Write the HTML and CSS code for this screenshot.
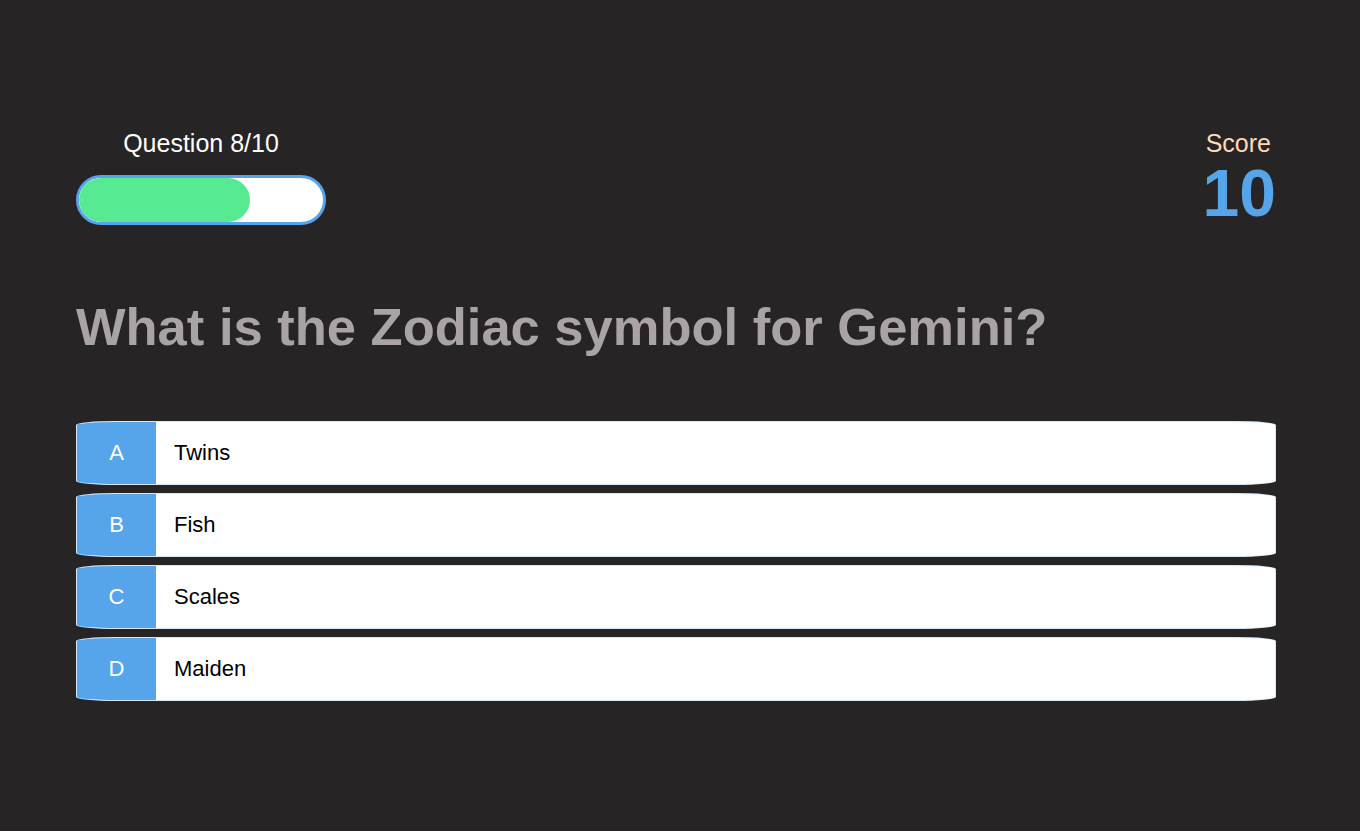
FILE: index.html
```html
<!DOCTYPE html>
<html lang="en">
<head>
<meta charset="utf-8">
<title>Quiz</title>
<link rel="stylesheet" href="styles.css">
</head>
<body>
<div class="container">
  <div class="game">
    <div class="hud">
      <div class="hud-item">
        <p class="hud-prefix">Question 8/10</p>
        <div class="progress-bar">
          <div class="progress-full" style="width: 70%"></div>
        </div>
      </div>
      <div class="hud-item score-item">
        <p class="hud-prefix score-label">Score</p>
        <h1 class="hud-main">10</h1>
      </div>
    </div>
    <h2 class="question">What is the Zodiac symbol for Gemini?</h2>
    <div class="choice">
      <p class="choice-prefix">A</p>
      <p class="choice-text">Twins</p>
    </div>
    <div class="choice">
      <p class="choice-prefix">B</p>
      <p class="choice-text">Fish</p>
    </div>
    <div class="choice">
      <p class="choice-prefix">C</p>
      <p class="choice-text">Scales</p>
    </div>
    <div class="choice">
      <p class="choice-prefix">D</p>
      <p class="choice-text">Maiden</p>
    </div>
  </div>
</div>
</body>
</html>
```
FILE: styles.css
```css
* { box-sizing: border-box; }
html, body {
  margin: 0;
  padding: 0;
  background: #262425;
  font-family: "Liberation Sans", Arial, sans-serif;
}
.container {
  width: 1200px;
  margin-left: 76px;
  padding-top: 127px;
}
.hud {
  display: flex;
  justify-content: space-between;
}
.hud-item {
  display: flex;
  flex-direction: column;
  align-items: center;
}
.hud-prefix {
  margin: 0;
  font-size: 25px;
  line-height: 32px;
  color: #ffffff;
}
.progress-bar {
  margin-top: 16px;
  width: 250px;
  height: 50px;
  border: 3px solid #56a5eb;
  border-radius: 25px;
  background: #ffffff;
  overflow: hidden;
}
.progress-full {
  height: 100%;
  background: #56eb93;
  border-radius: 22px;
}
.score-item { align-items: flex-end; }
.score-label { color: #ffdab9; padding-right: 5px; }
.hud-main {
  margin: 0;
  font-size: 66px;
  line-height: 68px;
  font-weight: 700;
  color: #56a5eb;
}
.question {
  margin: 68px 0 62px;
  font-size: 52.5px;
  line-height: 64px;
  font-weight: 700;
  color: #aaa3a4;
}
.choice {
  display: flex;
  height: 64px;
  margin-bottom: 8px;
  background: #ffffff;
  border: 1px solid rgba(86, 165, 235, 0.25);
  border-radius: 40px / 4px;
  overflow: hidden;
}
.choice-prefix {
  margin: 0;
  width: 79px;
  flex: none;
  background: #56a5eb;
  color: #ffffff;
  font-size: 22px;
  display: flex;
  align-items: center;
  justify-content: center;
}
.choice-text {
  margin: 0;
  padding-left: 18px;
  font-size: 22px;
  color: #000000;
  display: flex;
  align-items: center;
}
```
